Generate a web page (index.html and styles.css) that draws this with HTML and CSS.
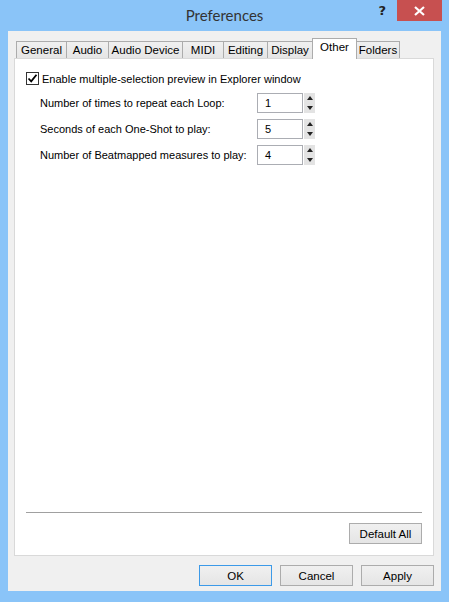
FILE: index.html
```html
<!DOCTYPE html>
<html lang="en">
<head>
  <meta charset="UTF-8" />
  <title>Preferences</title>
  <link rel="stylesheet" href="styles.css">
</head>
<body>
  <div class="janela">
    <div class="barra-titulo">
      <span></span>
      <span class="titulo">Preferences</span>
      <div class="controles">
        <span class="ajuda">?</span>
        <span class="fechar">
          <svg width="11" height="10" viewBox="0 0 11 10"><path d="M1 1 L10 9 M10 1 L1 9" stroke="#fff" stroke-width="2.2"/></svg>
        </span>
      </div>
    </div>

    <div class="cliente">
      <div class="abas">
        <span class="aba w-general">General</span>
        <span class="aba w-audio">Audio</span>
        <span class="aba w-device">Audio Device</span>
        <span class="aba w-midi">MIDI</span>
        <span class="aba w-editing">Editing</span>
        <span class="aba w-display">Display</span>
        <span class="aba ativa w-other">Other</span>
        <span class="aba w-folders">Folders</span>
      </div>

      <div class="painel">
        <label class="check-linha">
          <span class="caixa">
            <svg width="11" height="11" viewBox="0 0 11 11"><path d="M1.5 5.5 L4.2 8.3 L9.5 1.8" fill="none" stroke="#000" stroke-width="1.8"/></svg>
          </span>
          Enable multiple-selection preview in Explorer window
        </label>

        <div class="opcoes">
          <div class="linha">
            <span class="rotulo">Number of times to repeat each Loop:</span>
            <div class="spin">
              <span class="valor">1</span>
              <span class="setas"><i class="up"></i><i class="down"></i></span>
            </div>
          </div>
          <div class="linha">
            <span class="rotulo">Seconds of each One-Shot to play:</span>
            <div class="spin">
              <span class="valor">5</span>
              <span class="setas"><i class="up"></i><i class="down"></i></span>
            </div>
          </div>
          <div class="linha">
            <span class="rotulo">Number of Beatmapped measures to play:</span>
            <div class="spin">
              <span class="valor">4</span>
              <span class="setas"><i class="up"></i><i class="down"></i></span>
            </div>
          </div>
        </div>

        <div class="rodape-painel">
          <hr class="separador">
          <div class="linha-direita">
            <button class="btn">Default All</button>
          </div>
        </div>
      </div>

      <div class="botoes">
        <button class="btn padrao">OK</button>
        <button class="btn">Cancel</button>
        <button class="btn">Apply</button>
      </div>
    </div>
  </div>
</body>
</html>
```

FILE: styles.css
```css
body {
  margin: 0;
  background-color: #8ac4f8;
  font-family: 'Liberation Sans', Arial, sans-serif;
  font-size: 11px;
  color: #000;
}
.janela {
  width: 449px;
  height: 602px;
  background-color: #8ac4f8;
  display: flex;
  flex-direction: column;
}
.barra-titulo {
  height: 31px;
  display: grid;
  grid-template-columns: 1fr auto 1fr;
  align-items: start;
}
.titulo {
  font-family: 'Lato', sans-serif;
  font-size: 15px;
  color: #333;
  margin-top: 6px;
}
.controles {
  display: flex;
  justify-content: flex-end;
  align-items: flex-start;
  padding-right: 7px;
}
.ajuda {
  font-family: 'DejaVu Sans', sans-serif;
  font-weight: bold;
  font-size: 13px;
  color: #222;
  margin-top: 3px;
  margin-right: 11px;
}
.fechar {
  width: 45px;
  height: 21px;
  background-color: #c75050;
  display: flex;
  align-items: center;
  justify-content: center;
}
.cliente {
  margin: 0 8px;
  height: 560px;
  background-color: #f0f0f0;
  padding: 7px 7px 0 6px;
  box-sizing: border-box;
  display: flex;
  flex-direction: column;
}
.abas {
  display: flex;
  align-items: flex-end;
  height: 20px;
  padding-left: 2px;
  position: relative;
  z-index: 1;
  font-size: 11.5px;
}
.aba {
  height: 17px;
  box-sizing: border-box;
  border: 1px solid #acacac;
  border-bottom: none;
  border-right: none;
  background: linear-gradient(#f0f0f0, #e5e5e5);
  text-align: center;
  line-height: 17px;
  color: #000;
  white-space: nowrap;
}
.aba:last-child { border-right: 1px solid #acacac; }
.aba.ativa {
  height: 21px;
  margin-bottom: -1px;
  background: #fff;
  border: 1px solid #acacac;
  border-bottom: none;
  line-height: 17px;
}
.aba.ativa + .aba { border-left: none; }
.w-general { width: 50px; }
.w-audio { width: 42px; }
.w-device { width: 74px; }
.w-midi { width: 41px; }
.w-editing { width: 44px; }
.w-display { width: 45px; }
.w-other { width: 45px; }
.w-folders { width: 43px; }

.painel {
  height: 498px;
  box-sizing: border-box;
  background-color: #fff;
  border: 1px solid #d9d9d9;
  padding: 13px 11px 11px 11px;
  display: flex;
  flex-direction: column;
}
.check-linha {
  display: flex;
  align-items: center;
  gap: 3px;
  height: 13px;
  white-space: nowrap;
}
.caixa {
  width: 13px;
  height: 13px;
  box-sizing: border-box;
  border: 1px solid #333;
  background: #fff;
  display: flex;
  align-items: center;
  justify-content: center;
}
.opcoes {
  margin-top: 8px;
  padding-left: 14px;
  display: flex;
  flex-direction: column;
  gap: 6px;
}
.linha {
  display: flex;
  align-items: center;
  height: 20px;
}
.rotulo { width: 217px; white-space: nowrap; }
.spin {
  display: flex;
  height: 20px;
}
.valor {
  width: 46px;
  box-sizing: border-box;
  border: 1px solid #abadb3;
  padding-left: 7px;
  line-height: 18px;
}
.setas {
  width: 11px;
  margin-left: 1px;
  display: flex;
  flex-direction: column;
  background: #e3e3e3;
}
.setas i {
  flex: 1;
  display: flex;
  align-items: center;
  justify-content: center;
}
.setas i::before {
  content: "";
  border-left: 3px solid transparent;
  border-right: 3px solid transparent;
}
.setas .up::before { border-bottom: 4px solid #222; }
.setas .down::before { border-top: 4px solid #222; }

.rodape-painel {
  margin-top: auto;
}
.separador {
  margin: 0 0 10px 0;
  border: none;
  border-top: 1px solid #a0a0a0;
}
.linha-direita {
  display: flex;
  justify-content: flex-end;
}
.btn {
  width: 73px;
  height: 21px;
  box-sizing: border-box;
  border: 1px solid #acacac;
  background: linear-gradient(#f0f0f0, #e5e5e5);
  font-family: 'Liberation Sans', Arial, sans-serif;
  font-size: 11.5px;
  padding: 0;
  color: #000;
}
.btn.padrao {
  border-color: #3c9ae8;
}
.botoes {
  display: flex;
  justify-content: flex-end;
  gap: 8px;
  margin-top: 9px;
}
```
